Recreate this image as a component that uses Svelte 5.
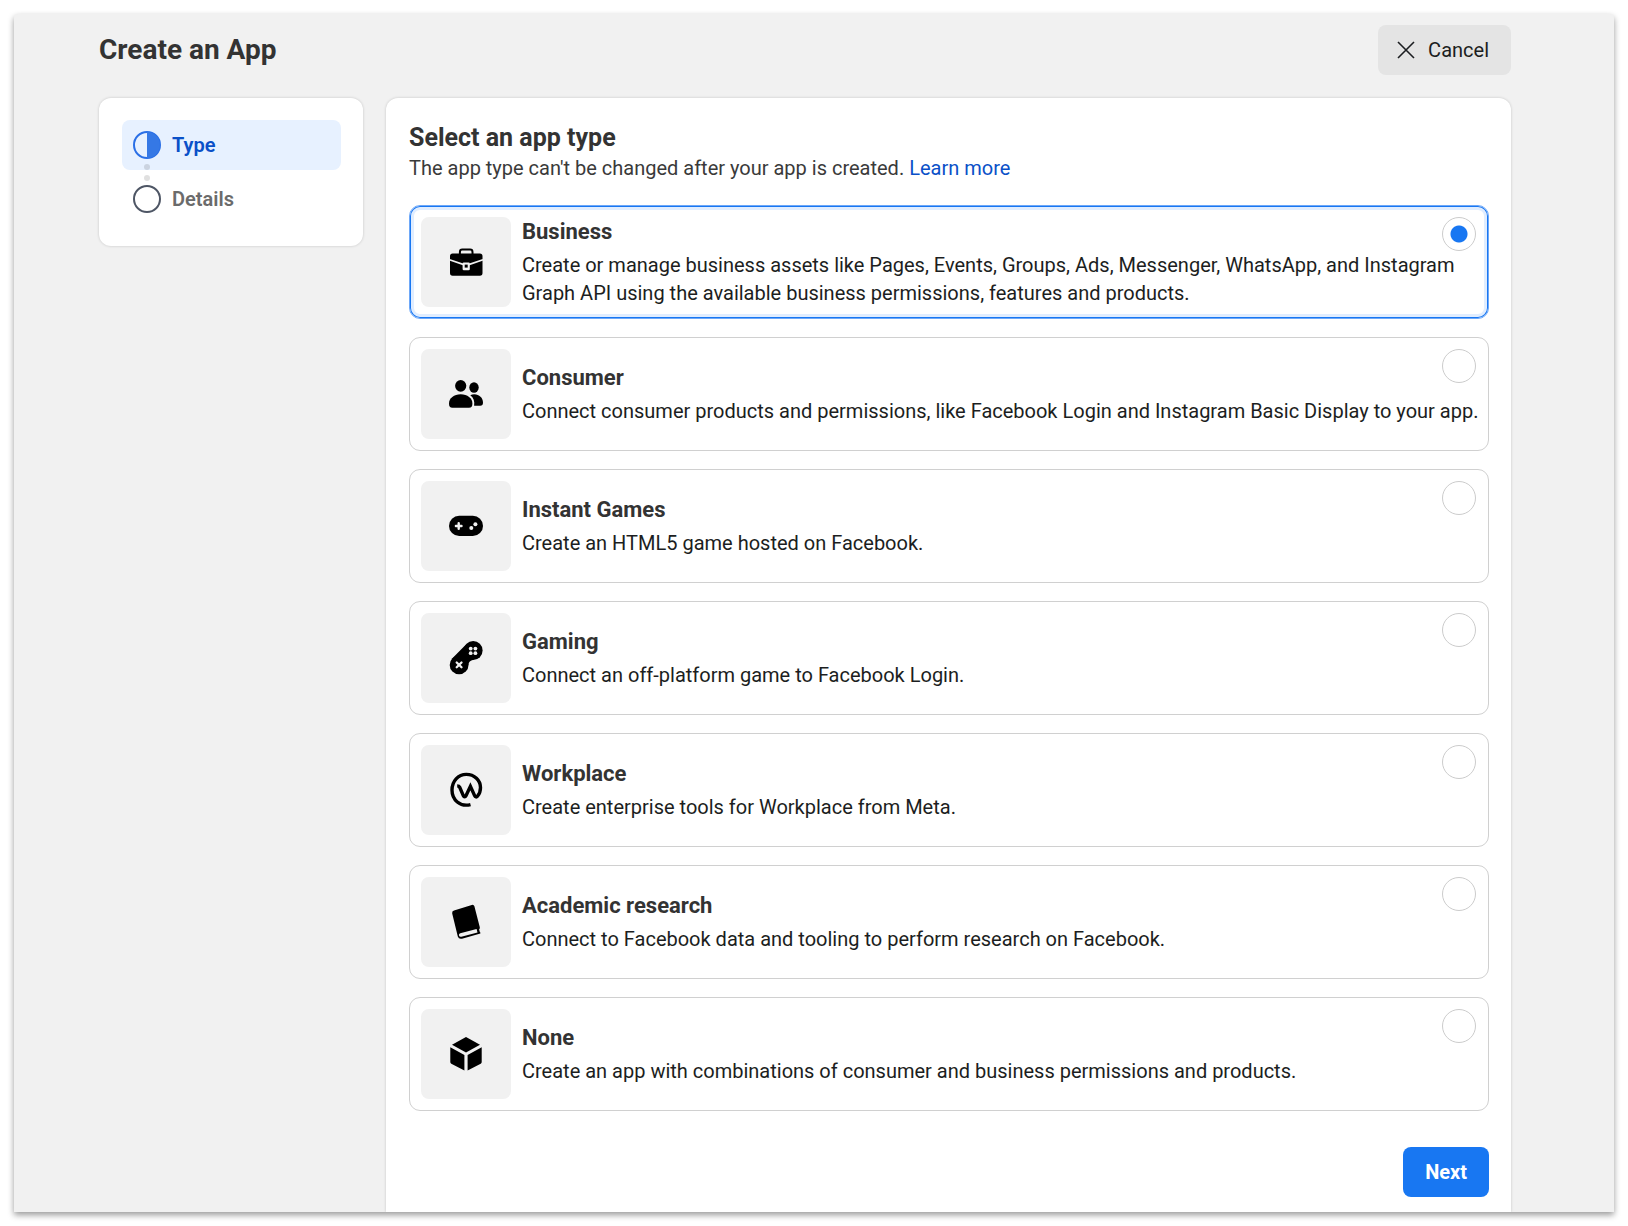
<script lang="ts">
  type AppType = {
    id: string;
    name: string;
    description: string;
  };

  const appTypes: AppType[] = [
    {
      id: "business",
      name: "Business",
      description:
        "Create or manage business assets like Pages, Events, Groups, Ads, Messenger, WhatsApp, and Instagram Graph API using the available business permissions, features and products.",
    },
    {
      id: "consumer",
      name: "Consumer",
      description:
        "Connect consumer products and permissions, like Facebook Login and Instagram Basic Display to your app.",
    },
    {
      id: "instant",
      name: "Instant Games",
      description: "Create an HTML5 game hosted on Facebook.",
    },
    {
      id: "gaming",
      name: "Gaming",
      description: "Connect an off-platform game to Facebook Login.",
    },
    {
      id: "workplace",
      name: "Workplace",
      description: "Create enterprise tools for Workplace from Meta.",
    },
    {
      id: "academic",
      name: "Academic research",
      description: "Connect to Facebook data and tooling to perform research on Facebook.",
    },
    {
      id: "none",
      name: "None",
      description: "Create an app with combinations of consumer and business permissions and products.",
    },
  ];

  let selected = $state("business");
</script>

{#snippet icon(id: string)}
  <svg width="36" height="36" viewBox="0 0 36 36" aria-hidden="true">
    {#if id === "business"}
      <path class="line" stroke-width="2" d="M11.900 10.500V8q0-2.400 2.400-2.400h7.800q2.400 0 2.400 2.400v2.500" />
      <rect x="2" y="9.500" width="32.500" height="22.200" rx="2.600" />
      <path class="cut-line" stroke-width="1.700" d="M1.500 15.800 15 20.400h6.500l13.500-4.600" />
      <rect class="cut" x="14.600" y="18.600" width="7.200" height="7.600" rx="1.200" />
      <rect x="16.700" y="20.600" width="3" height="3" />
    {:else if id === "consumer"}
      <ellipse cx="12.700" cy="9.800" rx="5.600" ry="5.900" />
      <path d="M1 27.500c0-5.200 5-9.200 11.700-9.200s11.700 4 11.700 9.200c0 3-1 4.200-3.400 4.200H4.400C2 31.700 1 30.500 1 27.500z" />
      <ellipse cx="26" cy="11.500" rx="4.700" ry="5.200" />
      <path d="M22.300 19.200c1.200-.6 2.500-.9 4-.9 5 0 8.700 3.600 8.700 8.200 0 2.200-.9 3.200-2.800 3.200h-6.100c.7-4.400-.5-7.900-3.800-10.500z" />
    {:else if id === "instant"}
      <rect x="1" y="7.700" width="34" height="20.400" rx="10.200" />
      <path class="cut-line" stroke-width="2.400" stroke-linecap="round" d="M7.900 18h5.600M10.700 15.200v5.600" />
      <circle class="cut" cx="23.300" cy="20" r="2" />
      <circle class="cut" cx="27.400" cy="16.300" r="2" />
    {:else if id === "gaming"}
      <circle cx="25.200" cy="10.500" r="9.400" />
      <circle cx="11.100" cy="24.900" r="9.400" />
      <path d="M18.500 3.900 4.400 18.300 11 30l9.400-5.100q.2-4.300 5.200-5.200z" />
      <circle class="cut" cx="22.700" cy="8.600" r="1.900" />
      <circle class="cut" cx="27.400" cy="8.600" r="1.900" />
      <circle class="cut" cx="22.700" cy="13.200" r="1.900" />
      <circle class="cut" cx="27.400" cy="13.200" r="1.900" />
      <path class="cut-line" stroke-width="2.300" stroke-linecap="round" d="m8.700 22.500 4.800 4.800m0-4.800-4.800 4.800" />
    {:else if id === "workplace"}
      <path
        class="line"
        stroke-width="3.400"
        d="M22.500 32.600C12 35.200 4 27.800 4 18 4 9 10.200 2.400 18.300 2.400S32.500 8.500 32.500 15.500c0 3.600-1.500 7-3 8.700-1 1.200-2.300.9-2.900-.5L22.400 14.300 18 23.800c-.7 1.400-2 1.400-2.600 0L11.700 15.300q-.6-1.400-2.500-1.400"
      />
    {:else if id === "academic"}
      <path d="M6 6.500 23.800.9q2-.5 2.600 1.400l5.400 20.900q.3 1.400-.7 2l.7 2.700q.8.200.6 1.500L14 34.700q-3.200.8-4.200-2.200L4.200 9.500Q3.700 7.200 6 6.500z" />
      <path class="cut" d="M12.300 29.200 28.600 25l.9 3.400-16.200 4.300q-1.900.3-2.300-1.300t1.300-2.200z" />
    {:else}
      <path d="M18 .9 32 8.700 18 16.400 4 8.700z" />
      <path d="M2.300 11.200 16.400 19v15.600L3.300 27.700q-1-.5-1-1.600z" />
      <path d="M33.700 11.200 19.600 19v15.600l13.100-6.900q1-.5 1-1.600z" />
    {/if}
  </svg>
{/snippet}

<div class="page">
  <header class="topbar">
    <h1>Create an App</h1>
    <button class="cancel" type="button">
      <svg width="18" height="18" viewBox="0 0 18 18" aria-hidden="true">
        <path d="M1 1 17 17M17 1 1 17" />
      </svg>
      Cancel
    </button>
  </header>

  <div class="columns">
    <nav class="card steps" aria-label="Steps">
      <a class="step active" href="#type" aria-current="step">
        <svg width="28" height="28" viewBox="0 0 28 28" aria-hidden="true">
          <circle cx="14" cy="14" r="13" />
          <path d="M14 1a13 13 0 0 1 0 26z" />
        </svg>
        Type
      </a>
      <a class="step" href="#details">
        <svg width="28" height="28" viewBox="0 0 28 28" aria-hidden="true">
          <circle cx="14" cy="14" r="13" />
        </svg>
        Details
      </a>
      <span class="dots" aria-hidden="true"></span>
    </nav>

    <main class="card panel">
      <h2>Select an app type</h2>
      <p class="intro">
        The app type can't be changed after your app is created.
        <a href="#learn-more">Learn more</a>
      </p>

      <div class="options" role="radiogroup" aria-label="App type">
        {#each appTypes as appType}
          <label class="option" class:selected={appType.id === selected}>
            <span class="tile">{@render icon(appType.id)}</span>
            <span class="text">
              <span class="name">{appType.name}</span>
              <span class="description">{appType.description}</span>
            </span>
            <input type="radio" name="app-type" value={appType.id} bind:group={selected} />
          </label>
        {/each}
      </div>

      <div class="actions">
        <button class="next" type="button">Next</button>
      </div>
    </main>
  </div>
</div>

<style>
  :global(body) {
    background: #fff;
    color: #1c1e21;
    font-family: Roboto, "Liberation Sans", sans-serif;
    font-size: 20px;
    line-height: 28px;
  }

  .page {
    margin: 14px;
    padding: 11px 103px 0 85px;
    background: #f1f1f1;
    border-radius: 4px 4px 0 0;
    box-shadow: 0 3px 6px rgba(0, 0, 0, 0.4);
  }

  h1,
  h2,
  p {
    margin: 0;
  }

  .topbar {
    display: flex;
    align-items: center;
    justify-content: space-between;
    margin-bottom: 23px;
  }

  h1 {
    color: #333;
    font-size: 28px;
    line-height: 36px;
    font-weight: 700;
  }

  button {
    height: 50px;
    border: 0;
    border-radius: 8px;
    font: inherit;
    cursor: pointer;
  }

  .cancel {
    display: flex;
    align-items: center;
    gap: 13px;
    padding: 0 22px 0 19px;
    background: #e4e4e4;
    color: #1c1e21;
  }

  .cancel svg {
    fill: none;
    stroke: #1c1e21;
    stroke-width: 1.6;
  }

  .columns {
    display: grid;
    grid-template-columns: 264px minmax(0, 1fr);
    gap: 23px;
    align-items: start;
  }

  .card {
    background: #fff;
    border-radius: 12px;
    box-shadow: 0 0 3px rgba(0, 0, 0, 0.18);
  }

  .steps {
    position: relative;
    display: grid;
    gap: 4px;
    padding: 22px 22px 22px 23px;
  }

  .step {
    display: flex;
    align-items: center;
    gap: 11px;
    height: 50px;
    padding: 0 11px;
    border-radius: 8px;
    color: #6b6b6b;
    font-weight: 600;
    text-decoration: none;
  }

  .step.active {
    background: #e7f1ff;
    color: #0a50c8;
  }

  .step circle {
    fill: none;
    stroke: #4e5665;
    stroke-width: 2;
  }

  .step.active circle {
    stroke: #2a6fe6;
  }

  .step.active path {
    fill: #3578e5;
  }

  .dots {
    position: absolute;
    top: 66px;
    left: 45px;
    width: 6px;
    height: 6px;
    border-radius: 50%;
    background: rgba(0, 0, 0, 0.12);
    box-shadow: 0 11px rgba(0, 0, 0, 0.12);
  }

  .panel {
    padding: 24px 22px 15px 23px;
    border-radius: 12px 12px 0 0;
    clip-path: inset(-4px -4px 0 -4px);
  }

  h2 {
    color: #333;
    font-size: 25px;
    line-height: 32px;
    font-weight: 700;
  }

  .intro {
    margin-bottom: 23px;
    color: #3a3a3a;
  }

  .intro a {
    color: #0a50c8;
    text-decoration: none;
  }

  .options {
    display: grid;
    gap: 18px;
  }

  .option {
    position: relative;
    display: flex;
    align-items: center;
    gap: 11px;
    padding: 11px 4px 11px 11px;
    border: 1px solid #d0d0d0;
    border-radius: 11px;
    cursor: pointer;
  }

  .option.selected {
    border-color: #6ea8f8;
    box-shadow:
      inset 0 0 0 1px #1877f2,
      inset 0 0 0 4px #e0edff;
  }

  .tile {
    display: grid;
    flex: none;
    width: 90px;
    height: 90px;
    place-items: center;
    border-radius: 8px;
    background: #f1f1f1;
  }

  .line {
    fill: none;
    stroke: #000;
  }

  .cut {
    fill: #f1f1f1;
  }

  .cut-line {
    fill: none;
    stroke: #f1f1f1;
  }

  .text {
    display: grid;
    gap: 4px;
  }

  .name {
    color: #333;
    font-size: 22px;
    line-height: 30px;
    font-weight: 700;
  }

  .option input {
    position: absolute;
    top: 11px;
    right: 12px;
    width: 34px;
    height: 34px;
    margin: 0;
    border: 1px solid #ccc;
    border-radius: 50%;
    background: #fff;
    appearance: none;
    cursor: pointer;
  }

  .option input:checked {
    background: radial-gradient(circle, #1877f2 8px, #fff 9px);
  }

  .actions {
    display: flex;
    justify-content: flex-end;
    margin-top: 36px;
  }

  .next {
    padding: 0 22px;
    background: #1877f2;
    color: #fff;
    font-weight: 700;
  }
</style>
